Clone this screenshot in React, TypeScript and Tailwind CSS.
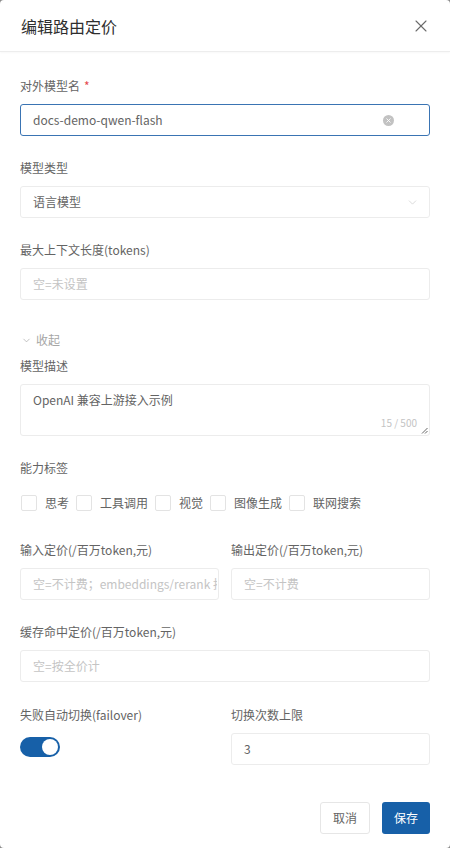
import React from "react";
import { X, ChevronDown } from "lucide-react";

const font = { fontFamily: '"Noto Sans CJK SC", "Noto Sans", sans-serif' };

function Label({ children, required }: { children: React.ReactNode; required?: boolean }) {
  return (
    <div className="mb-2 h-5 text-[12px] leading-5 text-[#646464]">
      {children}
      {required && <span className="ml-1 text-[#e5484d]">*</span>}
    </div>
  );
}

function Input({ value, placeholder }: { value?: string; placeholder?: string }) {
  return (
    <div className="flex h-8 items-center overflow-hidden rounded-[3px] border border-[#ececec] bg-white pl-3 pr-[1px] text-[12px]">
      {value ? (
        <span className="text-[#646464]">{value}</span>
      ) : (
        <span className="block min-w-0 overflow-hidden whitespace-nowrap text-[#c4c4c4]">{placeholder}</span>
      )}
    </div>
  );
}

const tags = ["思考", "工具调用", "视觉", "图像生成", "联网搜索"];

export default function App() {
  return (
    <div className="h-[848px] w-[450px] bg-[#8a8a8a]" style={font}>
      <div className="flex h-full flex-col overflow-hidden rounded-[4px] bg-white">
        <header className="flex h-[52px] shrink-0 items-center justify-between border-b border-[#ededed] pl-[21px] pr-[19px] shadow-[0_1px_2px_rgba(0,0,0,0.03)]">
          <h1 className="text-[16px] font-normal text-[#2e2e2e]">编辑路由定价</h1>
          <X className="h-[20px] w-[20px] text-[#6b6b6b]" strokeWidth={1.3} />
        </header>

        <div className="flex flex-1 flex-col px-5 pt-6">
          <div className="mb-[22px]">
            <Label required>对外模型名</Label>
            <div className="flex h-8 items-center justify-between rounded-[3px] border border-[#3a74b3] bg-white pl-3 pr-[35px] text-[12px]">
              <span className="text-[#646464]">docs-demo-qwen-flash</span>
              <span className="flex h-[11px] w-[11px] items-center justify-center rounded-full bg-[#c2c2c2]">
                <X className="h-[7px] w-[7px] text-white" strokeWidth={3} />
              </span>
            </div>
          </div>

          <div className="mb-[22px]">
            <Label>模型类型</Label>
            <div className="flex h-8 items-center justify-between rounded-[3px] border border-[#ececec] bg-white pl-3 pr-[10px] text-[12px]">
              <span className="text-[#646464]">语言模型</span>
              <ChevronDown className="h-[13px] w-[13px] text-[#c9c9c9]" strokeWidth={1.25} />
            </div>
          </div>

          <div className="mb-[31px]">
            <Label>最大上下文长度(tokens)</Label>
            <Input placeholder="空=未设置" />
          </div>

          <div className="mb-[7px] flex h-[18px] items-center gap-[4px] pl-[1px] text-[12px] leading-[18px] text-[#a6a6a6]">
            <ChevronDown className="h-[11px] w-[11px]" strokeWidth={1.5} />
            <span>收起</span>
          </div>

          <div className="mb-[22px]">
            <Label>模型描述</Label>
            <div className="relative h-[52px] rounded-[3px] border border-[#ececec] bg-white px-3 pt-[6px] text-[12px] text-[#646464]">
              OpenAI 兼容上游接入示例
              <span className="absolute bottom-[7px] right-[12px] text-[10px] leading-none text-[#c4c4c4]">15 / 500</span>
              <svg className="absolute bottom-[1px] right-[1px]" width="7" height="7" viewBox="0 0 7 7">
                <path d="M1 6.5L6.5 1M4 6.5L6.5 4" stroke="#555" strokeWidth="0.9" />
              </svg>
            </div>
          </div>

          <div className="mb-[29px]">
            <Label>能力标签</Label>
            <div className="mt-[17px] flex h-4 items-center pl-[1px] text-[12px] text-[#646464]">
              {tags.map((t) => (
                <div key={t} className="mr-[7px] flex items-center">
                  <span className="mr-[8px] h-4 w-4 rounded-[2px] border border-[#e3e3e3] bg-white" />
                  <span>{t}</span>
                </div>
              ))}
            </div>
          </div>

          <div className="mb-[22px] grid grid-cols-2 gap-3">
            <div className="min-w-0">
              <Label>输入定价(/百万token,元)</Label>
              <Input placeholder="空=不计费；embeddings/rerank 按输入计价" />
            </div>
            <div className="min-w-0">
              <Label>输出定价(/百万token,元)</Label>
              <Input placeholder="空=不计费" />
            </div>
          </div>

          <div className="mb-[23px]">
            <Label>缓存命中定价(/百万token,元)</Label>
            <Input placeholder="空=按全价计" />
          </div>

          <div className="grid grid-cols-2 gap-3">
            <div>
              <Label>失败自动切换(failover)</Label>
              <div className="mt-[12px] flex h-5 w-10 items-center justify-end rounded-full bg-[#1760a8] pr-[2px]">
                <span className="h-4 w-4 rounded-full bg-white" />
              </div>
            </div>
            <div>
              <Label>切换次数上限</Label>
              <Input value="3" />
            </div>
          </div>

          <div className="mt-auto flex justify-end gap-3 pb-[14px]">
            <button className="h-8 rounded-[3px] border border-[#e6e6e6] bg-white px-3 text-[12px] text-[#646464]">取消</button>
            <button className="h-8 rounded-[3px] bg-[#1760a8] px-3 text-[12px] text-white">保存</button>
          </div>
        </div>
      </div>
    </div>
  );
}
